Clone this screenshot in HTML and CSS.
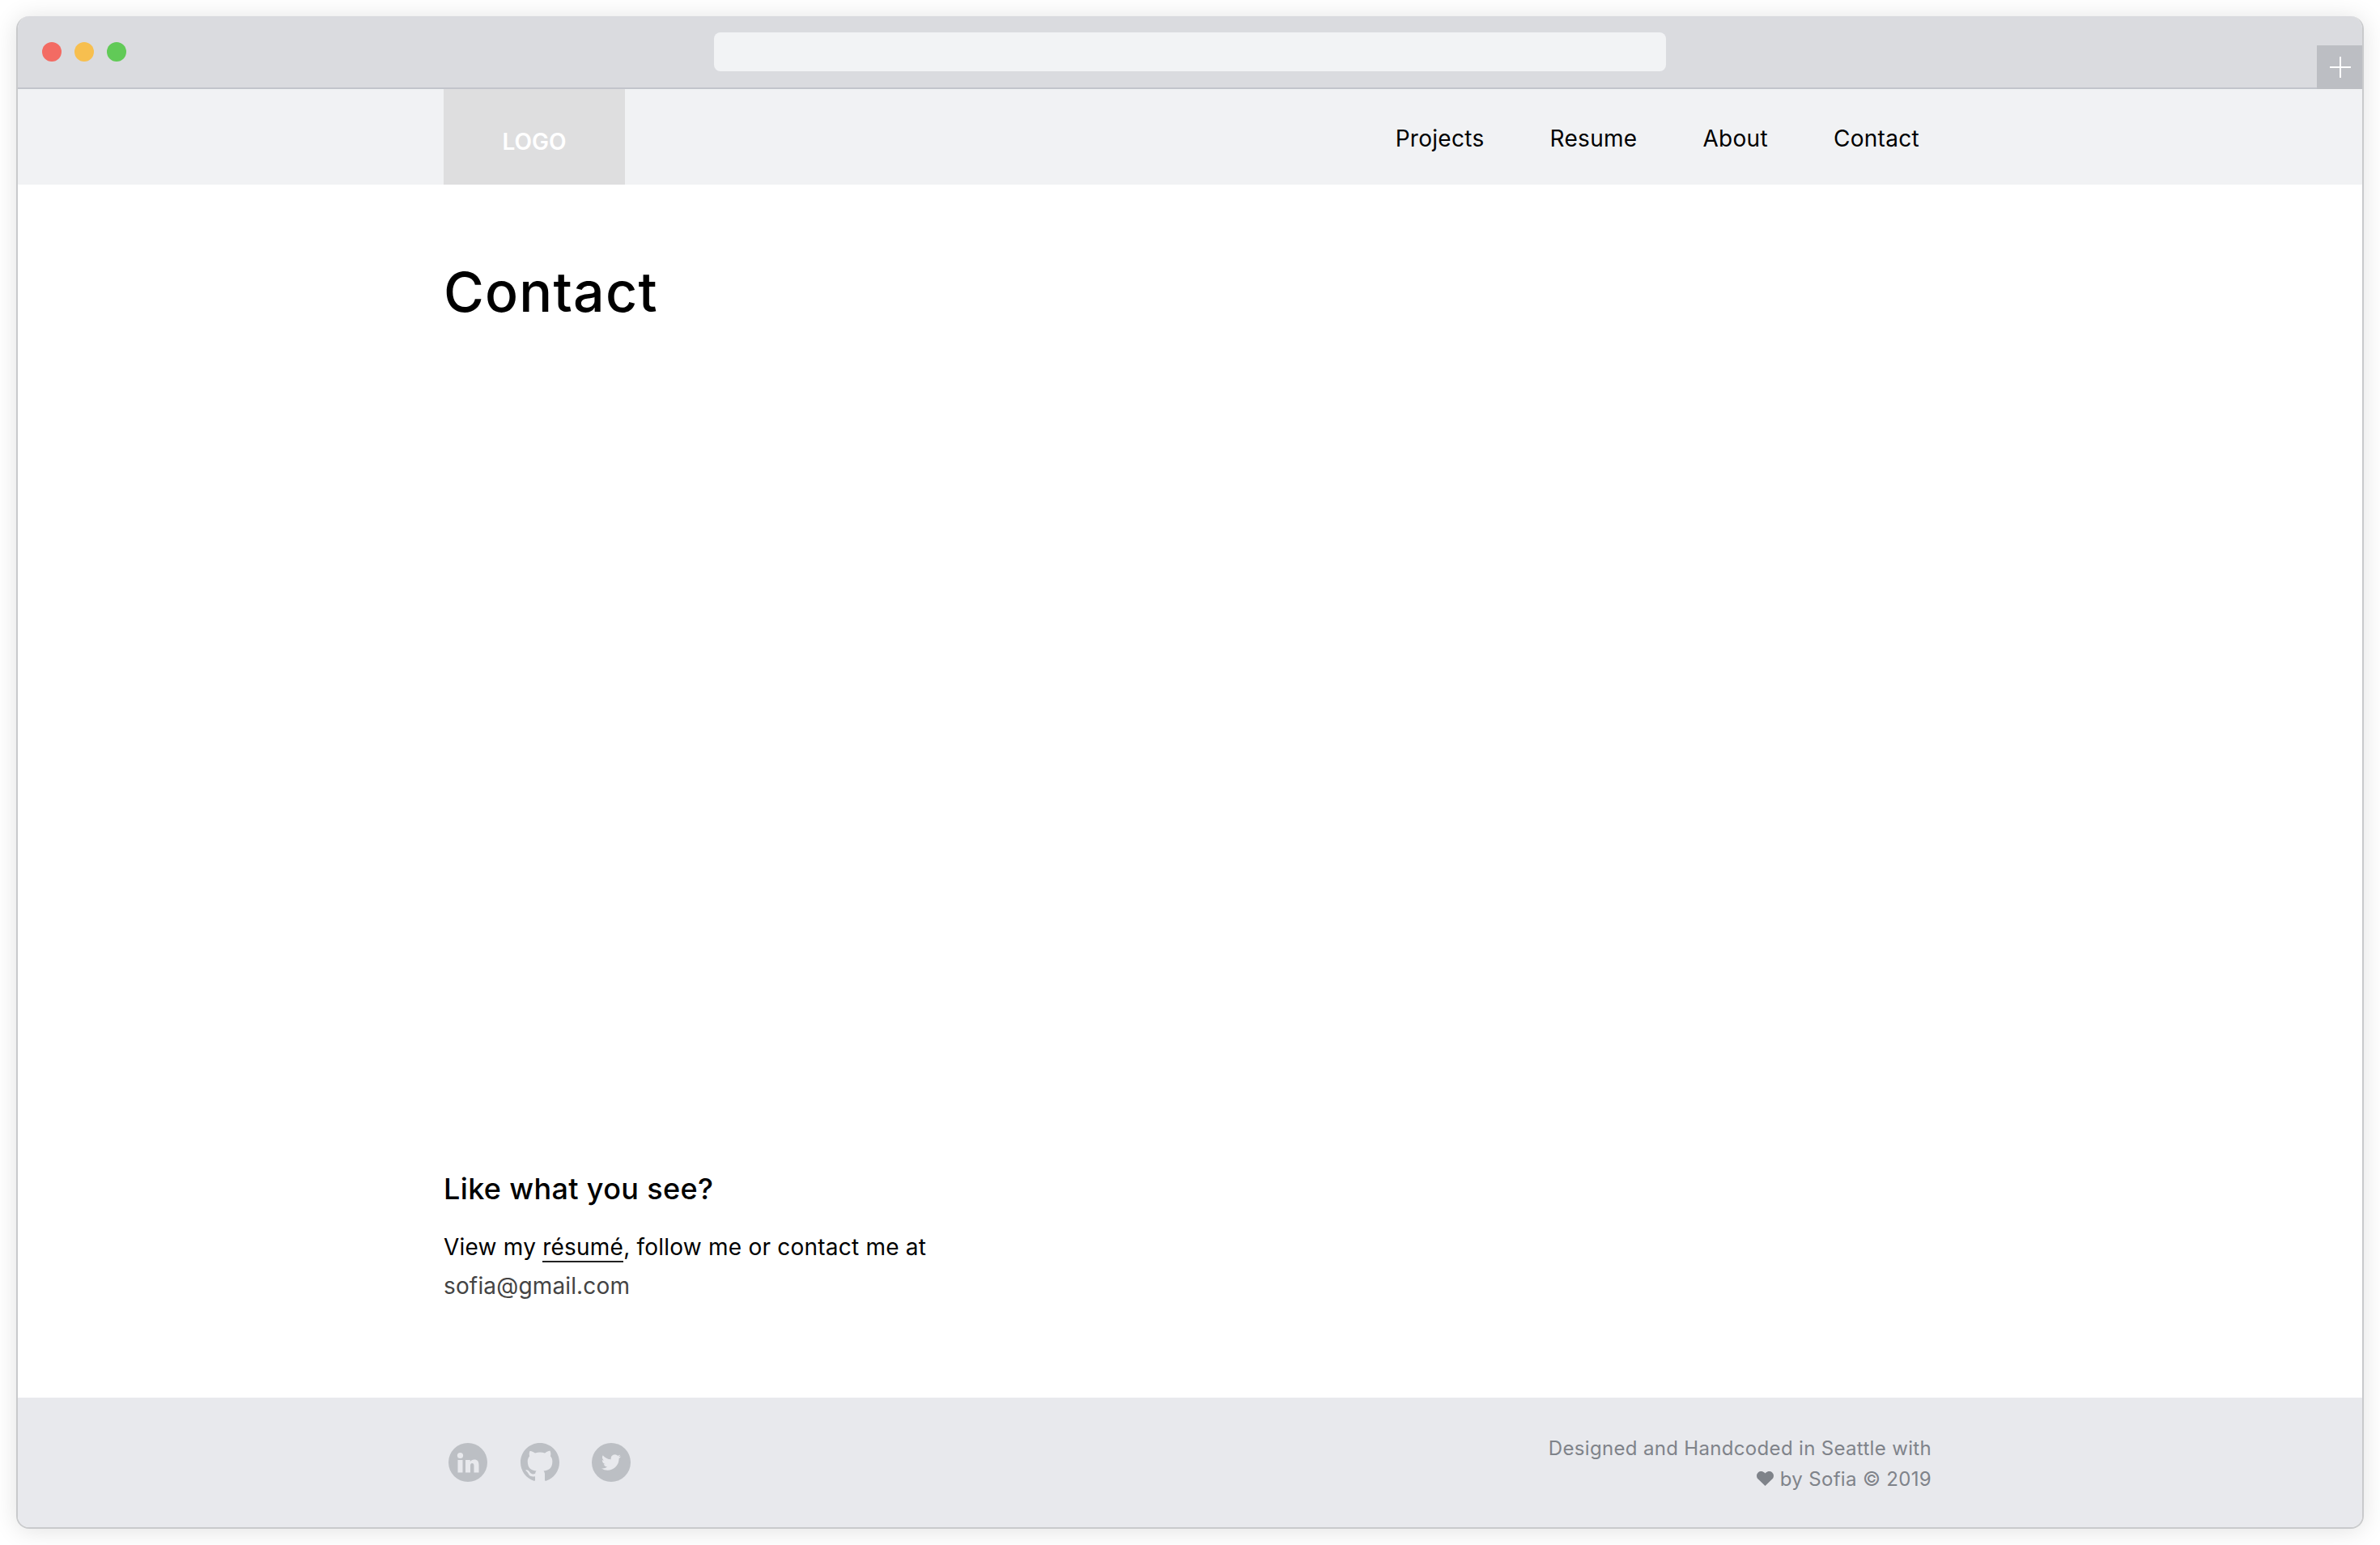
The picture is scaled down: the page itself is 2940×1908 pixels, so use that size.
FILE: index.html
```html
<!DOCTYPE html>
<html lang="en">
<head>
<meta charset="utf-8">
<title>Contact</title>
<link rel="stylesheet" href="styles.css">
</head>
<body>
<div class="window">
  <header class="chrome">
    <div class="dots"><span class="dot red"></span><span class="dot yellow"></span><span class="dot green"></span></div>
    <div class="url"></div>
    <div class="newtab">
      <svg width="26" height="26" viewBox="0 0 26 26"><path d="M13 0v26M0 13h26" stroke="#fff" stroke-width="2" fill="none"/></svg>
    </div>
  </header>
  <nav class="nav">
    <a class="logo">LOGO</a>
    <ul class="links">
      <li>Projects</li><li>Resume</li><li>About</li><li>Contact</li>
    </ul>
  </nav>
  <main class="main">
    <h1 class="title">Contact</h1>
    <section class="cta">
      <h2 class="cta-title">Like what you see?</h2>
      <p class="cta-text">View my <a class="resume">résumé</a>, follow me or contact me at</p>
      <p class="cta-mail">sofia@gmail.com</p>
    </section>
  </main>
  <footer class="footer">
    <div class="social">
      <svg class="icon" viewBox="0 0 48 48"><circle cx="24" cy="24" r="24" fill="#bcbfc4"/><g fill="#e8e9ed"><circle cx="14.500" cy="15.500" r="3.600"/><rect x="11.500" y="21" width="6" height="15.500"/><path d="M21 21h5.800v2.300c1-1.600 2.800-2.700 5-2.700 4.200 0 5.700 2.700 5.700 6.700v9.200h-6v-8.200c0-2-.5-3.400-2.300-3.400-1.900 0-2.200 1.600-2.200 3.400v8.200h-6z"/></g></svg>
      <svg class="icon" viewBox="0 0 16 16"><path fill="#bcbfc4" fill-rule="evenodd" d="M8 0C3.58 0 0 3.58 0 8c0 3.54 2.29 6.53 5.47 7.59.4.07.55-.17.55-.38 0-.19-.01-.82-.01-1.49-2.01.37-2.53-.49-2.69-.94-.09-.23-.48-.94-.82-1.13-.28-.15-.68-.52-.01-.53.63-.01 1.08.58 1.23.82.72 1.21 1.87.87 2.33.66.07-.52.28-.87.51-1.07-1.78-.2-3.64-.89-3.64-3.95 0-.87.31-1.59.82-2.15-.08-.2-.36-1.02.08-2.12 0 0 .67-.21 2.2.82.64-.18 1.32-.27 2-.27.68 0 1.36.09 2 .27 1.53-1.04 2.2-.82 2.2-.82.44 1.1.16 1.92.08 2.12.51.56.82 1.27.82 2.15 0 3.07-1.87 3.75-3.65 3.95.29.25.54.73.54 1.48 0 1.07-.01 1.93-.01 2.2 0 .21.15.46.55.38A8.013 8.013 0 0016 8c0-4.42-3.58-8-8-8z"/></svg>
      <svg class="icon" viewBox="0 0 48 48"><circle cx="24" cy="24" r="24" fill="#bcbfc4"/><path transform="translate(12 12)" fill="#e8e9ed" d="M23.953 4.57a10 10 0 01-2.825.775 4.958 4.958 0 002.163-2.723c-.951.555-2.005.959-3.127 1.184a4.92 4.92 0 00-8.384 4.482C7.69 8.095 4.067 6.13 1.64 3.162a4.822 4.822 0 00-.666 2.475c0 1.71.87 3.213 2.188 4.096a4.904 4.904 0 01-2.228-.616v.06a4.923 4.923 0 003.946 4.827 4.996 4.996 0 01-2.212.085 4.936 4.936 0 004.604 3.417 9.867 9.867 0 01-6.102 2.105c-.39 0-.779-.023-1.17-.067a13.995 13.995 0 007.557 2.209c9.053 0 13.998-7.496 13.998-13.985 0-.21 0-.42-.015-.63A9.935 9.935 0 0024 4.59z"/></svg>
    </div>
    <div class="credit">
      <p>Designed and Handcoded in Seattle with</p>
      <p><svg class="heart" viewBox="0 0 21 18"><path fill="#7f838a" d="M10.500 18 1.700 9.600C-.6 7.300-.5 3.600 1.800 1.500 4-.5 7.400-.5 9.500 1.600l1 1 1-1c2.100-2.100 5.500-2.100 7.700-.1 2.300 2.100 2.400 5.800.1 8.100z"/></svg> by Sofia © 2019</p>
    </div>
  </footer>
</div>
</body>
</html>
```
FILE: styles.css
```css
* { box-sizing: border-box; }
html, body { margin: 0; padding: 0; background: #fff; }
body { padding: 20px 20px 20px; font-family: Inter, "Liberation Sans", sans-serif; color: #000; }
p, h1, h2, ul { margin: 0; padding: 0; font-weight: 400; }
.window {
  display: flex; flex-direction: column; height: 1868px;
  border-radius: 16px; overflow: hidden; background: #fff;
  border-left: 2px solid #c9cacc; border-right: 2px solid #c9cacc; border-bottom: 2px solid #c9cacc;
  box-shadow: 0 2px 30px rgba(0,0,0,.12);
}
.chrome {
  height: 90px; flex: none; background: #dadbdf; border-bottom: 2px solid #c2c4cb;
  display: flex; align-items: flex-start; position: relative; justify-content: center;
}
.dots { position: absolute; left: 30px; top: 32px; display: flex; gap: 16px; }
.dot { width: 24px; height: 24px; border-radius: 50%; }
.red { background: #f36b63; }
.yellow { background: #f7bf4f; }
.green { background: #61ca57; }
.url { width: 1176px; height: 48px; margin-top: 20px; background: #f2f3f5; border-radius: 8px; }
.newtab {
  position: absolute; right: 0; top: 36px; width: 56px; height: 54px; background: #bcbec3;
  display: flex; align-items: center; justify-content: center; padding-left: 2px;
}
.newtab svg { display: block; }
.nav {
  height: 119px; flex: none; background: #f1f2f4; margin-top: -1px;
  padding-left: 526px; padding-right: 547px; display: flex; align-items: stretch; justify-content: space-between;
}
.logo {
  width: 224px; background: #dededf; color: #fff; font-size: 28px; font-weight: 600;
  display: flex; align-items: center; justify-content: center; padding-top: 13px;
}
.links { list-style: none; display: flex; gap: 81px; align-items: center; font-size: 28px; letter-spacing: .3px; padding-top: 4px; }
.main { flex: 1; padding: 98px 526px 0; display: flex; flex-direction: column; justify-content: space-between; }
.title { font-size: 68px; line-height: 1; letter-spacing: 1.2px; font-weight: 450; }
.cta { padding-bottom: 114px; }
.cta-title { font-size: 36px; line-height: 48px; font-weight: 450; letter-spacing: .35px; margin-bottom: 24px; }
.cta-text { font-size: 28px; line-height: 48px; letter-spacing: .22px; }
.resume { border-bottom: 2px solid #222; }
.cta-mail { font-size: 28px; line-height: 48px; letter-spacing: .15px; color: #444; }
.footer {
  height: 160px; flex: none; background: #e8e9ed; padding: 0 532px 0 532px;
  display: flex; justify-content: space-between; align-items: center;
}
.social { display: flex; gap: 40.5px; }
.icon { width: 48px; height: 48px; display: block; }
.credit { text-align: right; font-size: 24px; line-height: 38px; letter-spacing: .33px; color: #7f838a; padding-top: 3px; }
.heart { width: 21px; height: 18px; display: inline-block; margin-right: 1px; }
```
